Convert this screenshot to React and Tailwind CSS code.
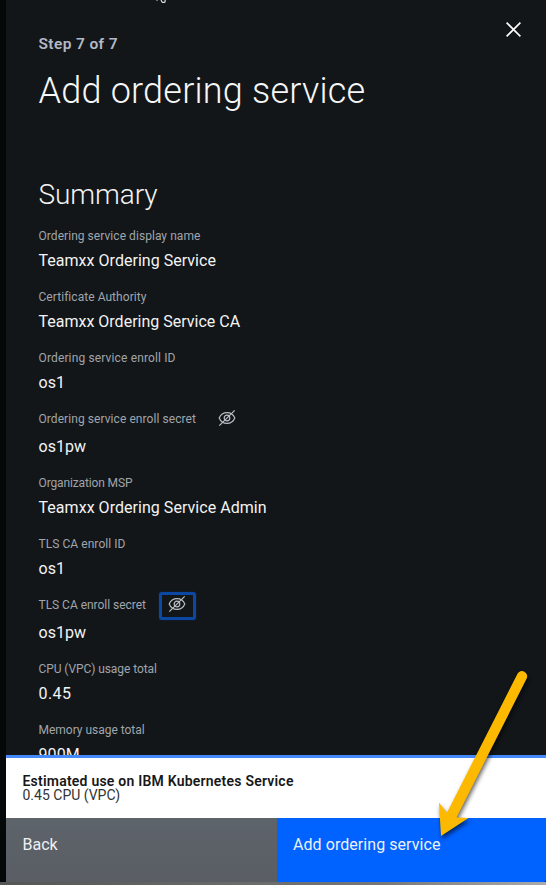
const rows = [
  { label: "Ordering service display name", value: "Teamxx Ordering Service", lt: "tracking-[0.05px]", vt: "tracking-[0.03px]" },
  { label: "Certificate Authority", value: "Teamxx Ordering Service CA", lt: "tracking-[0.05px]", vt: "tracking-[0px]" },
  { label: "Ordering service enroll ID", value: "os1", lt: "tracking-[0.14px]", vt: "tracking-[0.1px]" },
  { label: "Ordering service enroll secret", value: "os1pw", secret: true, lt: "tracking-[0.07px]", vt: "tracking-[0.05px]" },
  { label: "Organization MSP", value: "Teamxx Ordering Service Admin", lt: "tracking-[-0.13px]", vt: "tracking-[0.04px]" },
  { label: "TLS CA enroll ID", value: "os1", lt: "tracking-[0.06px]", vt: "tracking-[0.1px]" },
  { label: "TLS CA enroll secret", value: "os1pw", secret: true, focused: true, lt: "tracking-[-0.03px]", vt: "tracking-[0.05px]" },
  { label: "CPU (VPC) usage total", value: "0.45", lt: "tracking-[-0.07px]", vt: "tracking-[0.4px]" },
  { label: "Memory usage total", value: "900M", lt: "tracking-[-0.02px]", vt: "tracking-[0.1px]" },
];

function EyeOff() {
  return (
    <svg className="shrink-0" width="18" height="18" viewBox="0 0 18 18" fill="none" stroke="#b9bec4" strokeWidth="1.2">
      <path d="M1.2 9C2.6 5.6 5.5 3.6 9 3.6s6.4 2 7.8 5.4c-1.4 3.4-4.3 5.4-7.8 5.4S2.6 12.400 1.2 9Z" />
      <circle cx="9" cy="9" r="2.8" />
      <path d="M1.300 16.700 16.700 1.300" />
    </svg>
  );
}

function Row({ row }) {
  return (
    <div className={row.secret ? "h-16 shrink-0" : "h-[61px] shrink-0"}>
      <div className="flex h-4 items-center">
        <span className={`whitespace-nowrap text-xs leading-4 text-[#a0a5ab] ${row.lt}`}>{row.label}</span>
        {row.secret && (
          <button
            className={
              row.focused
                ? "ml-[13px] mt-[2px] flex h-7 w-[37px] shrink-0 justify-center rounded-[3px] border-[3px] border-[#0b48a4] shadow-[0_0_1px_#0b48a4]"
                : "ml-[12px] mt-[2px] flex h-7 w-[37px] shrink-0 justify-center border-[3px] border-transparent"
            }
          >
            <EyeOff />
          </button>
        )}
      </div>
      <div className={`${row.secret ? "mt-2" : "mt-[5px]"} whitespace-nowrap text-base leading-6 text-[#f3f3f3] ${row.vt}`}>{row.value}</div>
    </div>
  );
}

export default function App() {
  return (
    <div className="relative flex h-[885px] w-[546px] flex-col overflow-hidden bg-[#050808] font-[Roboto,'Liberation_Sans',sans-serif]">
      <div className="ml-1.5 flex min-h-0 flex-1 flex-col bg-[#121619]">
        <div className="flex h-[156px] shrink-0 justify-between pl-[32.5px] pr-[25px]">
          <div className="pt-[33px]">
            <p className="whitespace-nowrap text-[15.500px] font-semibold leading-[22px] tracking-[0.38px] text-[#b4b9c6]">Step 7 of 7</p>
            <h1 className="mt-3 whitespace-nowrap text-4xl font-light leading-[48px] tracking-[0.22px] text-[#f7f7f7]">Add ordering service</h1>
          </div>
          <svg className="mt-[22px]" width="15" height="15" viewBox="0 0 15 15" stroke="#fff" strokeWidth="1.600">
            <path d="M.6.6 14.400 14.400M14.400.6.6 14.400" />
          </svg>
        </div>
        <div className="flex min-h-0 flex-1 flex-col overflow-hidden pl-[32.5px]">
          <h2 className="mb-[14px] mt-5 h-[38px] shrink-0 text-[28px] font-light leading-[38px] tracking-[-0.1px] text-[#f3f3f3]">Summary</h2>
          {rows.map((row) => (
            <Row key={row.label} row={row} />
          ))}
        </div>
      </div>
      <div className="ml-1.5 h-[63px] shrink-0 border-t-[3px] border-[#4589ff] bg-white pl-[16.5px] pt-4 text-sm leading-[14px] text-[#171717]">
        <p className="whitespace-nowrap font-semibold tracking-[0.22px]">Estimated use on IBM Kubernetes Service</p>
        <p className="whitespace-nowrap tracking-[0px] text-[#333]">0.45 CPU (VPC)</p>
      </div>
      <div className="ml-1.5 flex h-16 shrink-0 text-base leading-[54px] text-[#edf1f5]">
        <button className="flex w-[271px] items-start bg-linear-to-b from-[#5d646a] to-[#5a5d64] pl-[16.5px] tracking-[0px]">Back</button>
        <button className="flex flex-1 items-start rounded-br-[2px] bg-[#0062ff] pl-4 tracking-[0.06px]">Add ordering service</button>
      </div>
      <div className="h-[3px] shrink-0 bg-linear-to-r from-[#555] from-0% via-[#777] via-70% to-[#aaa]" />
      <svg className="absolute left-[155px] top-0" width="14" height="4" viewBox="0 0 14 4" fill="none" stroke="#ddd" strokeWidth="1.2">
        <path d="M2 0v.8M6 0 7 1.900q1.500 1 3 0L10.200 0" />
      </svg>
      <svg className="absolute left-0 top-0 drop-shadow-[1px_3px_2px_rgba(0,0,0,0.6)]" width="546" height="885" viewBox="0 0 546 885" fill="#fdb900">
        <path d="M517.500 673.700A5.200 5.200 0 0 1 526.800 678.300L456.500 817.500 468.500 818 441 836 439 802.500 447 812.800Z" />
      </svg>
    </div>
  );
}
